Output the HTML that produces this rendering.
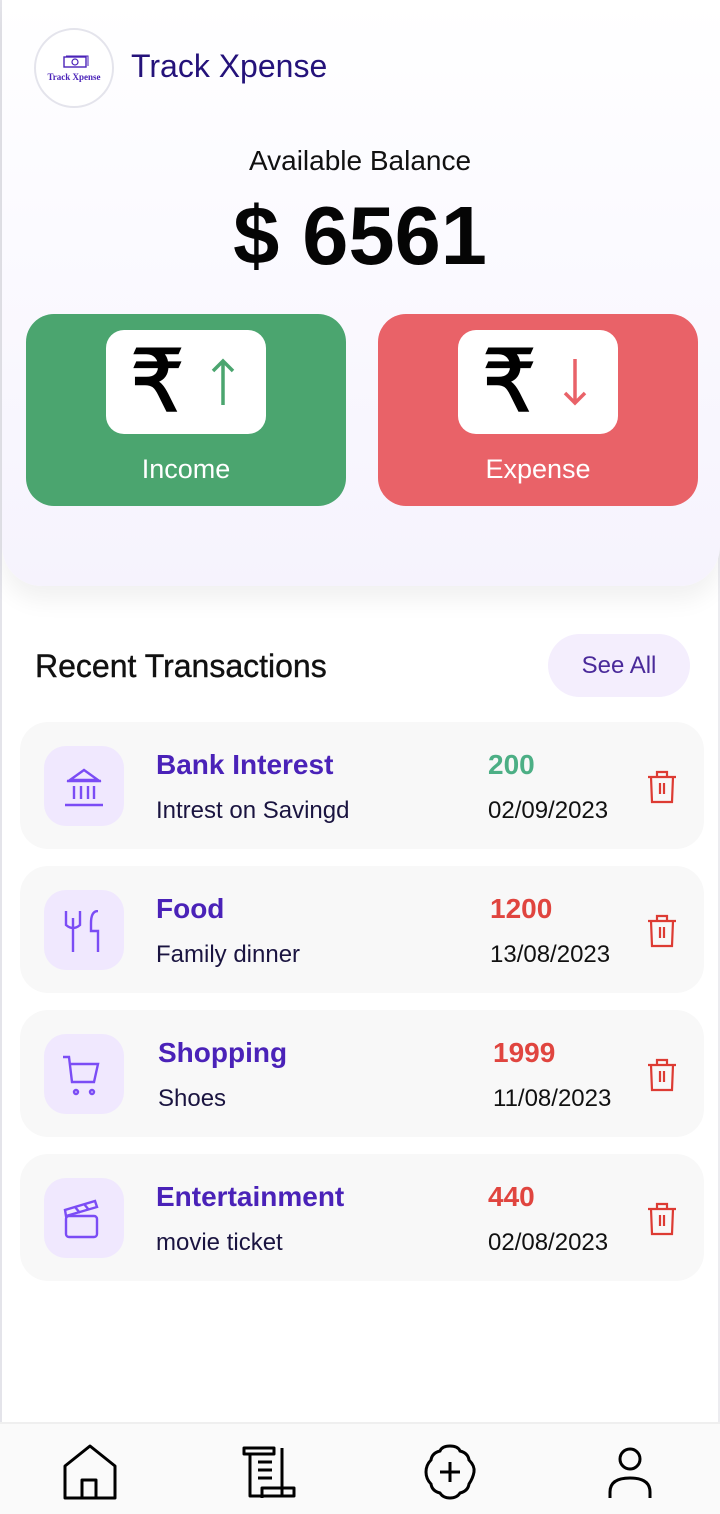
<!DOCTYPE html>
<html><head><meta charset="utf-8"><style>
*{box-sizing:border-box;margin:0;padding:0}
body{width:720px;height:1514px;background:#fff;font-family:"Liberation Sans",sans-serif;position:relative;overflow:hidden}
.lb{position:absolute;left:0;top:0;width:2px;height:1422px;background:#e4e4ea}
.rb{position:absolute;right:0;top:0;width:2px;height:1422px;background:#ececf0}
.top{position:absolute;left:2px;top:0;width:718px;height:586px;background:linear-gradient(#fff 0%,#fbfaff 40%,#f6f3fd 100%);border-radius:0 0 40px 40px;box-shadow:0 14px 24px rgba(0,0,0,.06)}
.logo{position:absolute;left:34px;top:28px;width:80px;height:80px;border-radius:50%;border:2px solid #e4e4ec;background:#fff;text-align:center}
.logo .t{position:absolute;top:42px;left:0;width:100%;font-family:"Liberation Serif",serif;font-size:9px;font-weight:bold;color:#4a22b8}
.title{position:absolute;left:131px;top:48px;font-size:32px;color:#24127a}
.ab{position:absolute;left:0;width:720px;top:145px;text-align:center;font-size:28px;color:#111}
.bal{position:absolute;left:0;width:720px;top:188px;text-align:center;font-size:83px;font-weight:bold;color:#050505}
.card{position:absolute;top:314px;width:320px;height:192px;border-radius:28px}
.card .box{position:absolute;left:80px;top:16px;width:160px;height:104px;background:#fff;border-radius:18px}
.card .lab{position:absolute;left:0;width:100%;top:140px;text-align:center;color:#fff;font-size:27px}
.rs{position:absolute;left:24px;top:2px;font-size:86px;color:#000;line-height:100px;-webkit-text-stroke:1.5px #000}
.rt{position:absolute;left:35px;top:648px;font-size:32px;color:#111;-webkit-text-stroke:0.4px #111}
.see{position:absolute;left:548px;top:634px;width:142px;height:63px;border-radius:32px;background:#f4eefd;color:#4a2a9a;font-size:24px;text-align:center;line-height:63px}
.tx{position:absolute;left:20px;width:684px;height:127px;background:#f8f8f8;border-radius:28px}
.ic{position:absolute;left:24px;top:24px;width:80px;height:80px;background:#f0e8fe;border-radius:22px}
.ic svg{position:absolute;left:19px;top:20px}
.nm{position:absolute;left:136px;top:27px;font-size:28px;font-weight:bold;color:#4a22b8}
.sb{position:absolute;left:136px;top:75px;font-size:24px;color:#1a1440}
.am{position:absolute;left:468px;top:27px;font-size:28px;font-weight:bold}
.dt{position:absolute;left:468px;top:75px;font-size:24px;color:#111}
.tr{position:absolute;left:627px;top:48px}
.nav{position:absolute;left:0;top:1422px;width:720px;height:92px;background:#fafafa;border-top:2px solid #efefef}
.nav svg{position:absolute}
</style></head><body>
<div class="lb"></div><div class="rb"></div>
<div class="top"></div>
<div class="logo">
<svg width="26" height="14" viewBox="0 0 26 14" style="position:absolute;left:27px;top:25px"><rect x="1" y="2" width="22" height="10" fill="none" stroke="#4a22b8" stroke-width="1.4"/><circle cx="12" cy="7" r="3" fill="none" stroke="#4a22b8" stroke-width="1.2"/><path d="M3 1h22v10" fill="none" stroke="#4a22b8" stroke-width="1"/></svg>
<div class="t">Track Xpense</div></div>
<div class="title">Track Xpense</div>
<div class="ab">Available Balance</div>
<div class="bal">$ 6561</div>
<div class="card" style="left:26px;background:#4ba56f"><div class="box">
<div class="rs">₹</div>
<svg width="30" height="50" style="position:absolute;left:102px;top:28px"><path d="M15 3v44M5 13L15 3l10 10" fill="none" stroke="#4ba56f" stroke-width="3.5"/></svg>
</div><div class="lab">Income</div></div>
<div class="card" style="left:378px;background:#e96268"><div class="box">
<div class="rs">₹</div>
<svg width="30" height="50" style="position:absolute;left:102px;top:26px"><path d="M15 3v44M5 37l10 10 10-10" fill="none" stroke="#e96268" stroke-width="3.5"/></svg>
</div><div class="lab">Expense</div></div>
<div class="rt">Recent Transactions</div>
<div class="see">See All</div>

<div class="tx" style="top:722px"><div class="ic"><svg width="42" height="42" fill="none" stroke="#7b4cf5" stroke-width="2.4"><path d="M4 15h34M7 14l14-10 14 10zM11 20v13M18 20v13M25 20v13M31 20v13M2 39h38"/></svg></div>
<div class="nm">Bank Interest</div><div class="sb">Intrest on Savingd</div>
<div class="am" style="color:#4caf85">200</div><div class="dt">02/09/2023</div>
<svg class="tr" width="30" height="34" fill="none" stroke="#dd3b33" stroke-width="2.2"><path d="M1 7h28M10 7V2h10v5M4 7l1 25h20l1-25M13 13v11M17 13v11"/></svg></div>

<div class="tx" style="top:866px"><div class="ic"><svg width="42" height="42" fill="none" stroke="#7b4cf5" stroke-width="2.4"><path d="M3 1v14q7 6 14 0V1M10 8v34M35 1q-7 0-7 12v8h7v21"/></svg></div>
<div class="nm">Food</div><div class="sb">Family dinner</div>
<div class="am" style="color:#e0453f;left:470px">1200</div><div class="dt" style="left:470px">13/08/2023</div>
<svg class="tr" width="30" height="34" fill="none" stroke="#dd3b33" stroke-width="2.2"><path d="M1 7h28M10 7V2h10v5M4 7l1 25h20l1-25M13 13v11M17 13v11"/></svg></div>

<div class="tx" style="top:1010px"><div class="ic"><svg width="42" height="42" fill="none" stroke="#7b4cf5" stroke-width="2.4"><path d="M0 3h6l3 25h22l4-18H8"/><circle cx="13" cy="38" r="2"/><circle cx="29" cy="38" r="2"/></svg></div>
<div class="nm" style="left:138px">Shopping</div><div class="sb" style="left:138px">Shoes</div>
<div class="am" style="color:#e0453f;left:473px">1999</div><div class="dt" style="left:473px">11/08/2023</div>
<svg class="tr" width="30" height="34" fill="none" stroke="#dd3b33" stroke-width="2.2"><path d="M1 7h28M10 7V2h10v5M4 7l1 25h20l1-25M13 13v11M17 13v11"/></svg></div>

<div class="tx" style="top:1154px"><div class="ic"><svg width="42" height="42" fill="none" stroke="#7b4cf5" stroke-width="2.4"><rect x="3" y="18" width="31" height="21" rx="3"/><path d="M3 18l-1-6 30-9 2 6zM12 9l5 6M21 6l5 6"/></svg></div>
<div class="nm">Entertainment</div><div class="sb">movie ticket</div>
<div class="am" style="color:#e0453f">440</div><div class="dt">02/08/2023</div>
<svg class="tr" width="30" height="34" fill="none" stroke="#dd3b33" stroke-width="2.2"><path d="M1 7h28M10 7V2h10v5M4 7l1 25h20l1-25M13 13v11M17 13v11"/></svg></div>

<div class="nav">
<svg width="60" height="60" style="left:60px;top:18px" fill="none" stroke="#000" stroke-width="3" stroke-linejoin="round"><path d="M5 56V24L30 4l25 20v32zM22 56V38h14v18"/></svg>
<svg width="60" height="60" style="left:240px;top:20px" fill="none" stroke="#000" stroke-width="3" stroke-linejoin="round"><path d="M4 4h30v6H4zM10 10v42h32V4M14 52h40v-8H22v10M18 18h14M18 26h14M18 34h14" /></svg>
<svg width="60" height="60" style="left:420px;top:18px" fill="none" stroke="#000" stroke-width="3"><path d="M30 4q8 0 10 5 8 2 9 9 6 6 5 12t-5 12q-1 7-9 9-3 5-10 5t-10-5q-8-2-9-9-5-5-5-12t5-12q1-7 9-9 2-5 10-5z"/><path d="M30 20v20M20 30h20"/></svg>
<svg width="60" height="60" style="left:600px;top:18px" fill="none" stroke="#000" stroke-width="3"><circle cx="30" cy="17" r="10"/><path d="M10 56V50q0-14 20-14t20 14v6"/></svg>
</div>
</body></html>
